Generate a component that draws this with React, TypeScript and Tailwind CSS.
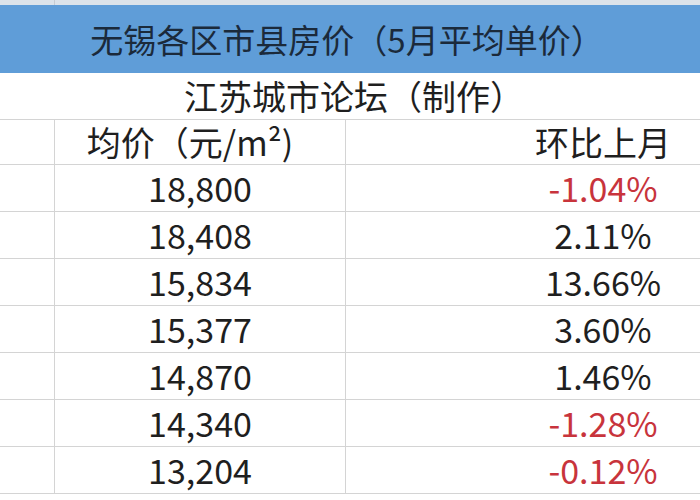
const rows = [
  { price: '18,800', change: '-1.04%' },
  { price: '18,408', change: '2.11%' },
  { price: '15,834', change: '13.66%' },
  { price: '15,377', change: '3.60%' },
  { price: '14,870', change: '1.46%' },
  { price: '14,340', change: '-1.28%' },
  { price: '13,204', change: '-0.12%' },
]

const font = { fontFamily: '"Noto Sans CJK SC", "Noto Sans", sans-serif' }

export default function App() {
  return (
    <div className="w-[700px] h-[500px] overflow-hidden bg-white text-[#1f1f1f]" style={font}>
      {/* sheet top strip */}
      <div className="grid h-[5px] grid-cols-[55px_1fr] bg-[#dce3ea]">
        <div className="border-r border-[#c6ccd3]" />
        <div />
      </div>

      <div className="flex h-[68px] items-center justify-center bg-[#5f9dd8] pr-[6px] text-[33px] leading-none text-[#1b2a3b]">
        无锡各区市县房价（5月平均单价）
      </div>

      <div className="flex h-[47px] items-center justify-center border-b border-[#d4d4d4] pl-[8px] text-[34px] leading-none">
        江苏城市论坛（制作）
      </div>

      <div className="grid w-[860px] grid-cols-[55px_291px_514px]">
        <div className="h-[45px] border-r border-b border-[#d4d4d4]" />
        <div className="flex h-[45px] items-center justify-center border-r border-b border-[#d4d4d4] pr-[20px] text-[34px] leading-none">
          均价（元/m²)
        </div>
        <div className="flex h-[45px] items-center justify-center border-b border-[#d4d4d4] text-[34px] leading-none">
          环比上月
        </div>

        {rows.map((r) => (
          <div key={r.price} className="contents">
            <div className="h-[47px] border-r border-b border-[#d4d4d4]" />
            <div className="flex h-[47px] items-center justify-center border-r border-b border-[#d4d4d4] text-[34px] leading-none">
              {r.price}
            </div>
            <div
              className={
                'flex h-[47px] items-center justify-center border-b border-[#d4d4d4] text-[34px] leading-none ' +
                (r.change.startsWith('-') ? 'text-[#c8343c]' : 'text-[#1f1f1f]')
              }
            >
              {r.change}
            </div>
          </div>
        ))}
      </div>
    </div>
  )
}
